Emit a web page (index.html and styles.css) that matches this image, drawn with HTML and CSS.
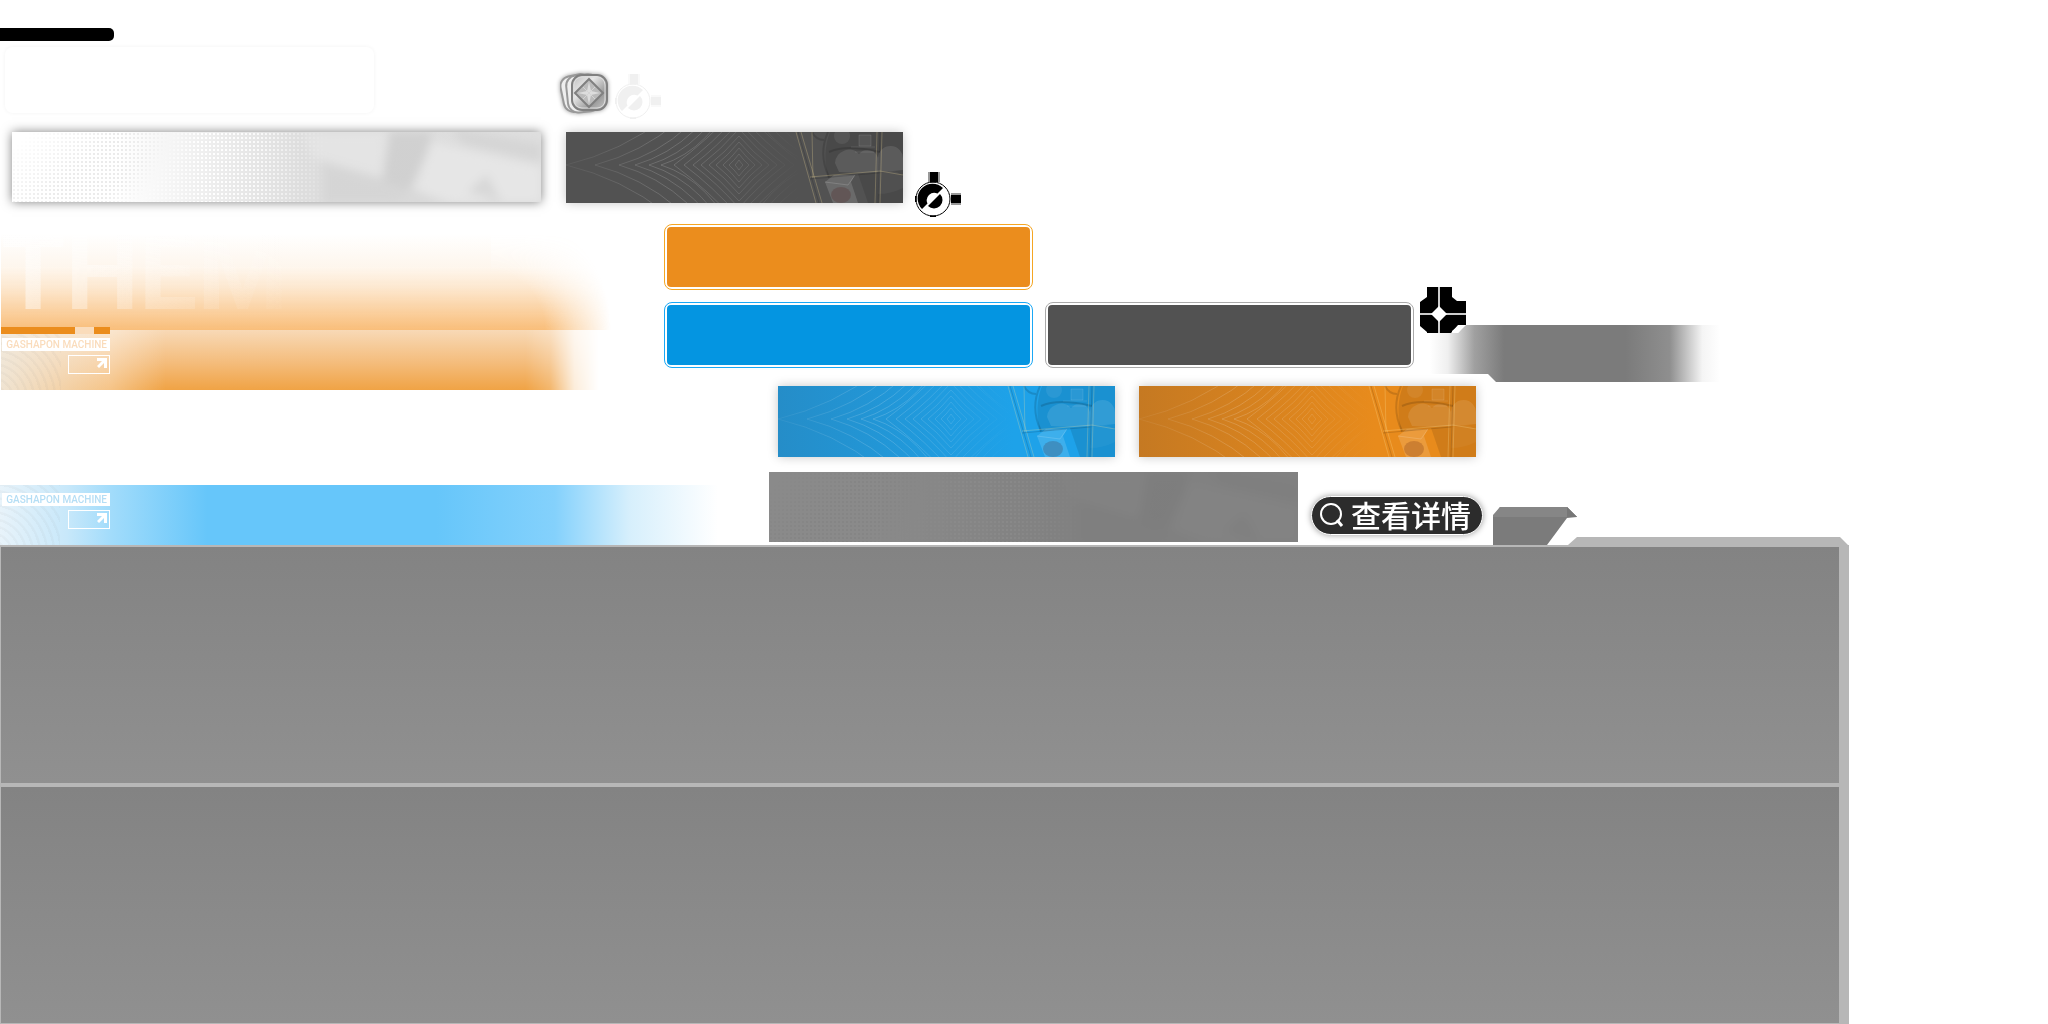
FILE: index.html
```html
<!DOCTYPE html>
<html lang="zh">
<head>
<meta charset="utf-8">
<title>GASHAPON MACHINE</title>
<link rel="stylesheet" href="styles.css">
</head>
<body>
<svg class="defs" width="0" height="0" aria-hidden="true">
  <defs>
    <path id="star" d="M-1 0Q-.35-.2 0-1Q.35-.2 1 0Q.35.2 0 1Q-.35.2-1 0Z" vector-effect="non-scaling-stroke"/>
    <path id="kite" d="M-1 0Q-.48-.42 0-1Q.48-.42 1 0Q.48.42 0 1Q-.48.42-1 0Z" vector-effect="non-scaling-stroke"/>
    <linearGradient id="fade"><stop offset="0" stop-color="#fff" stop-opacity=".3"/><stop offset=".3" stop-color="#fff"/><stop offset=".5" stop-color="#fff" stop-opacity=".7"/><stop offset=".7" stop-color="#fff" stop-opacity="0"/></linearGradient>
    <mask id="starMask" maskUnits="userSpaceOnUse" x="0" y="0" width="337" height="71"><rect width="337" height="71" fill="url(#fade)"/></mask>
    <symbol id="machine" viewBox="0 0 337 71">
      <g mask="url(#starMask)"><g transform="translate(173 33)" fill="none" stroke="#fff" stroke-opacity=".17">
        <use href="#kite" transform="scale(4 5)"/><use href="#kite" transform="scale(10 11)"/><use href="#kite" transform="scale(16 17)"/><use href="#kite" transform="scale(23 23)"/><use href="#kite" transform="scale(30 29)"/><use href="#kite" transform="scale(38 36)"/><use href="#kite" transform="scale(46 43)"/><use href="#kite" transform="scale(55 51)"/><use href="#kite" transform="scale(65 59)"/><use href="#star" transform="scale(78 80)"/><use href="#star" transform="scale(90 90)"/><use href="#star" transform="scale(104 100)"/><use href="#star" transform="scale(120 111)"/><use href="#star" transform="scale(144 124)"/><use href="#star" transform="scale(173 136)"/>
      </g></g>
      <path d="M264 0H337V71H302L292 42L262 46Q256 20 264 0Z" fill="#000" fill-opacity=".1"/>
      <path d="M246 0Q250 8 258 8M262 0Q252 22 263 45M263 20Q280 12 314 20" fill="none" stroke="#000" stroke-opacity=".14" stroke-width="2"/>
      <circle cx="276" cy="4" r="8" fill="#fff" fill-opacity=".07"/>
      <path d="M293 3H305V14H293ZM285 15H309M289 20H308" fill="#fff" fill-opacity=".07" stroke="#fff" stroke-opacity=".1"/>
      <path d="M269 31A14 14 0 0 1 293 22A11 11 0 0 1 312 26A10 10 0 0 1 337 27V38Q300 42 273 40Z" fill="#fff" fill-opacity=".1"/>
      <path d="M312 42Q330 35 337 45V56Q325 62 312 62Z" fill="#fff" fill-opacity=".04"/>
      <path d="M259 50L268 43H289L285 50L292 71H267Z" fill="#fff" fill-opacity=".14"/>
      <path d="M259 50L282 53L289 43" fill="none" stroke="#fff" stroke-opacity=".15"/>
      <ellipse cx="275" cy="63" rx="10" ry="8" fill="#400" fill-opacity=".18"/>
      <path d="M230 0L250 71M235 0L256 71M246 0L247 46M244 45L314 39L337 43M309 71L311 0M314 71L316 0" fill="none" stroke="#ffe9a0" stroke-opacity=".25"/>
      <path d="M232 0L253 71M312 71L314 0M244 47L312 41" fill="none" stroke="#000" stroke-opacity=".14"/>
    </symbol>

    <pattern id="dots" width="4" height="4" patternUnits="userSpaceOnUse"><rect x="1" y="1" width="2" height="2" fill="#ccc"/></pattern>
    <pattern id="holes" width="4" height="4" patternUnits="userSpaceOnUse"><rect x="1" y="1" width="2" height="2" fill="#fff"/></pattern>
    <linearGradient id="dotFade" gradientTransform="rotate(8)"><stop offset=".03" stop-color="#fff" stop-opacity="0"/><stop offset=".2" stop-color="#fff" stop-opacity=".4"/><stop offset=".3" stop-color="#fff" stop-opacity=".4"/><stop offset=".38" stop-color="#fff" stop-opacity="0"/></linearGradient>
    <linearGradient id="holeFade"><stop offset=".2" stop-color="#fff" stop-opacity="0"/><stop offset=".36" stop-color="#fff"/><stop offset=".46" stop-color="#fff" stop-opacity=".8"/><stop offset=".6" stop-color="#fff" stop-opacity="0"/></linearGradient>
    <linearGradient id="tone"><stop offset=".2" stop-color="#ddd" stop-opacity="0"/><stop offset=".55" stop-color="#ddd"/><stop offset="1" stop-color="#dedede"/></linearGradient>
    <mask id="dotMask" maskUnits="userSpaceOnUse" x="0" y="0" width="529" height="70"><rect width="529" height="70" fill="url(#dotFade)"/></mask>
    <mask id="holeMask" maskUnits="userSpaceOnUse" x="0" y="0" width="529" height="70"><rect width="529" height="70" fill="url(#holeFade)"/></mask>
    <filter id="soft"><feGaussianBlur stdDeviation="5"/></filter>
    <symbol id="halftone" viewBox="0 0 529 70">
      <rect width="529" height="70" fill="url(#tone)"/>
      <rect width="529" height="70" fill="url(#dots)" mask="url(#dotMask)"/>
      <rect width="529" height="70" fill="url(#holes)" mask="url(#holeMask)"/>
      <g filter="url(#soft)">
        <path d="M290 0H375L370 45L300 25Z" fill="#eee" fill-opacity=".4"/>
        <path d="M378 0H420L408 60L370 50Z" fill="#c8c8c8" fill-opacity=".6"/>
        <path d="M420 10L529 35V70H385L400 55Z" fill="#e9e9e9" fill-opacity=".8"/>
        <path d="M440 -4L529 12V30L450 12Z" fill="#c8c8c8" fill-opacity=".4"/>
        <path d="M455 60L475 42L490 70Z" fill="#c4c4c4" fill-opacity=".4"/>
        <path d="M310 30L380 50L440 72H310Z" fill="#d0d0d0" fill-opacity=".6"/>
      </g>
    </symbol>

    <symbol id="dial" viewBox="0 0 46 46">
      <g fill="currentColor">
        <path d="M13 0H25V10H13ZM36 21H46V33H36Z" fill-opacity=".4"/>
        <path d="M15 0H23V10H15ZM36 23H46V31H36Z"/>
      </g>
      <circle cx="18" cy="27" r="17" fill="#fff" stroke="currentColor"/>
      <path d="M15 10.500H21V9H15ZM15 45H21V43.500H15ZM0 24H1.500V30H0Z" fill="currentColor"/>
      <path d="M28 16A14.500 14.500 0 0 0 7 37L12.500 31.500A7.500 7.500 0 0 1 22.500 21.500Z" fill="currentColor"/>
      <path d="M25 22A8 8 0 0 1 13 34Z" fill="currentColor"/>
    </symbol>
    <symbol id="arrow" viewBox="0 0 10 10"><path d="M0 0H10V10H7V5L2 10L0 8L5 3H0Z" fill="#fff"/></symbol>
  </defs>
</svg>

<main class="sheet">
  <div class="top">
    <section class="left">
      <div class="bar"></div>
      <div class="blank"></div>
      <svg class="wide light" viewBox="0 0 529 70" aria-hidden="true"><use href="#halftone" width="529" height="70"/></svg>

      <div class="banner orange">
        <div class="glow"><span class="ghost">THEM</span></div>
        <div class="strip"><i></i><i></i><i></i></div>
        <div class="floor">
          <div class="tag">GASHAPON MACHINE</div>
          <button class="go" aria-label="Open"><svg width="10" height="10"><use href="#arrow"/></svg></button>
        </div>
      </div>

      <div class="banner blue">
        <div class="tag">GASHAPON MACHINE</div>
        <button class="go" aria-label="Open"><svg width="10" height="10"><use href="#arrow"/></svg></button>
      </div>
    </section>

    <section class="right">
      <div class="row icons">
        <svg class="tokens" width="56" height="56" viewBox="0 0 56 56" aria-hidden="true">
          <defs><linearGradient id="metal" x2="1" y2="1"><stop offset="0" stop-color="#bbb"/><stop offset=".35" stop-color="#e8e8e8"/><stop offset=".7" stop-color="#999"/><stop offset="1" stop-color="#ccc"/></linearGradient></defs>
          <g stroke="#999" stroke-width="2" fill="#eee">
            <rect x="2" y="15" width="30" height="36" rx="10" transform="rotate(-12 17 33)"/>
            <rect x="7" y="15" width="32" height="37" rx="10" transform="rotate(-6 22 33)"/>
            <rect x="12" y="15" width="35" height="35" rx="10" fill="url(#metal)" stroke="#808080"/>
          </g>
          <rect x="14" y="17" width="31" height="31" rx="8" fill="none" stroke="#ddd"/>
          <path d="M29 19L43 33L29 47L15 33Z" fill="#bbb" stroke="#808080" stroke-width="2"/>
          <path d="M29 22L31 31L40 33L31 35L29 44L27 35L18 33L27 31Z" fill="#ddd"/>
          <path d="M23 27L35 39M35 27L23 39" stroke="#d4d4d4"/>
        </svg>
        <svg class="dial faint" width="46" height="46" aria-hidden="true"><use href="#dial"/></svg>
      </div>
      <div class="row first">
        <svg class="card dark" viewBox="0 0 337 71" aria-hidden="true"><use href="#machine" width="337" height="71"/></svg>
        <svg class="dial" width="46" height="46" aria-hidden="true"><use href="#dial"/></svg>
      </div>
      <div class="row buttons">
        <button class="plate amber" aria-label="Amber"></button>
      </div>
      <div class="row buttons">
        <button class="plate sky" aria-label="Blue"></button>
        <button class="plate slate" aria-label="Grey"></button>
        <svg class="cross" width="306" height="96" viewBox="0 0 306 96" aria-hidden="true">
          <defs><linearGradient id="band"><stop offset="0" stop-color="#7b7b7b" stop-opacity="0"/><stop offset=".06" stop-color="#7b7b7b" stop-opacity=".12"/><stop offset=".15" stop-color="#7b7b7b" stop-opacity=".72"/><stop offset=".25" stop-color="#7b7b7b"/><stop offset=".66" stop-color="#7b7b7b"/><stop offset=".81" stop-color="#7b7b7b" stop-opacity=".85"/><stop offset=".86" stop-color="#7b7b7b" stop-opacity=".5"/><stop offset=".92" stop-color="#7b7b7b" stop-opacity=".08"/><stop offset=".98" stop-color="#7b7b7b" stop-opacity="0"/></linearGradient></defs>
          <path d="M10 38H306V95H76L68 87H10Z" fill="url(#band)"/>
          <path d="M31 38H46L38 46H31Z" fill="#fff"/>
          <path d="M7 0H32V10L37 14H46V38H38L31 46H7V45L0 39V15L7 10Z"/>
          <path d="M32 44L37 40H43L38 46H32Z" fill="#fff"/>
          <path d="M19 0V46M0 27H46" stroke="#ccc" stroke-width="2"/>
          <path d="M19 19L27 27L19 35L11 27Z" fill="#fff"/>
        </svg>
      </div>
      <div class="row cards">
        <svg class="card azure" viewBox="0 0 337 71" aria-hidden="true"><use href="#machine" width="337" height="71"/></svg>
        <svg class="card ochre" viewBox="0 0 337 71" aria-hidden="true"><use href="#machine" width="337" height="71"/></svg>
      </div>
      <div class="row last">
        <div class="wide grey"><svg viewBox="0 0 529 70" aria-hidden="true"><use href="#halftone" width="529" height="70"/></svg></div>
        <button class="pill">
          <svg width="24" height="24" viewBox="0 0 24 24" fill="none" stroke="#fff" aria-hidden="true"><circle cx="11" cy="11" r="10" stroke-width="2"/><path d="M17 17L22 23" stroke-width="3"/></svg>
          <span>查看详情</span>
        </button>
        <svg class="tab" width="84" height="38" viewBox="0 0 84 38" aria-hidden="true"><path d="M0 10L7 0H74L84 10L74 11L54 38H0Z" fill="#7b7b7b"/><path d="M0 10V8L7 0H74L84 10Z" fill="#868686"/><path d="M74 0L84 10H74Z" fill="#777"/></svg>
      </div>
    </section>
  </div>

  <section class="panels">
    <svg class="lip" width="281" height="10" viewBox="0 0 281 10" aria-hidden="true"><path d="M0 10V8L9 0H272L281 9V10Z" fill="#b7b7b7"/></svg>
    <div class="panel"></div>
    <div class="panel"></div>
  </section>
</main>
</body>
</html>
```
FILE: styles.css
```css
* { box-sizing: border-box; }
body { margin: 0; background: #fff; font-family: "Noto Sans", "Noto Sans CJK SC", sans-serif; }
svg { display: block; flex: none; }
button { margin: 0; padding: 0; border: 0; font: inherit; cursor: pointer; }
.defs { position: absolute; }
.sheet { overflow: hidden; }
.top { display: grid; grid-template-columns: 560px 1fr; }

/* Left column */
.left { display: flex; flex-direction: column; align-items: flex-start; padding-top: 28px; }
.bar { width: 114px; height: 13px; background: #000; border-radius: 0 5px 5px 0; }
.blank { width: 369px; height: 66px; margin: 6px 0 0 5px; border-radius: 8px; box-shadow: 0 0 4px rgba(0, 0, 0, .05); }
.wide { width: 529px; height: 70px; }
.light { margin: 19px 0 0 12px; background: #fff; box-shadow: 0 0 10px rgba(0, 0, 0, .5); }

.orange { width: 610px; margin: 23px 0 0 1px; }
.glow {
  height: 105px;
  background: linear-gradient(to bottom, rgba(249, 190, 122, 0) 8%, rgba(249, 190, 122, .13) 40%, rgba(249, 190, 122, .35) 59%, rgba(249, 190, 122, .65) 78%, #f9be7a);
  -webkit-mask: linear-gradient(#000, #000) left / 490px 100% no-repeat, radial-gradient(120px 130px at left bottom, #000 45%, rgba(0, 0, 0, .5) 70%, transparent) right / 120px 100% no-repeat;
  mask: linear-gradient(#000, #000) left / 490px 100% no-repeat, radial-gradient(120px 130px at left bottom, #000 45%, rgba(0, 0, 0, .5) 70%, transparent) right / 120px 100% no-repeat;
}
.ghost {
  display: block;
  font: 700 104px/98px Roboto, sans-serif;
  white-space: nowrap;
  color: transparent;
  background: linear-gradient(to right, rgba(255, 255, 255, .5), rgba(255, 255, 255, .3) 17%, rgba(255, 255, 255, .15) 30%, transparent 50%);
  -webkit-background-clip: text;
  background-clip: text;
}
.floor {
  height: 60px;
  padding: 8px 0 0 1px;
  background:
    repeating-radial-gradient(circle at -10px 70px, rgba(120, 120, 120, .05) 0 2px, transparent 3px 7px) 0 0 / 60px 60px no-repeat,
    linear-gradient(to right, rgba(240, 235, 225, .9), rgba(255, 255, 255, .35) 18%, transparent 27%),
    linear-gradient(to bottom, #f8d9b6, #f4bc7b 55%, #f0a345);
  -webkit-mask-image: linear-gradient(to right, #000 86%, rgba(0, 0, 0, .8) 90%, rgba(0, 0, 0, .2) 94%, transparent 98%);
  mask-image: linear-gradient(to right, #000 86%, rgba(0, 0, 0, .8) 90%, rgba(0, 0, 0, .2) 94%, transparent 98%);
}
.strip { position: relative; z-index: 1; display: grid; grid-template-columns: 74px 19px 16px; width: 109px; height: 7px; margin: -3px 0 -4px; }
.strip i { background: #eb8d1d; }
.strip i:nth-child(2) { background: #fadcbb; }
.tag {
  width: 108px;
  height: 13px;
  background: #fff;
  color: #fadcbc;
  font: 500 10px/13px Roboto, "Liberation Sans", sans-serif;
  text-align: right;
  padding-right: 3px;
  white-space: nowrap;
}
.go { display: flex; justify-content: flex-end; width: 42px; height: 19px; margin: 4px 0 0 66px; padding: 2px; background: none; border: 1px solid #fff; }
.blue {
  width: 740px;
  height: 60px;
  margin-top: 95px;
  padding: 8px 0 0 2px;
  background:
    repeating-radial-gradient(circle at -10px 70px, rgba(120, 120, 120, .05) 0 2px, transparent 3px 7px) 0 0 / 60px 60px no-repeat,
    linear-gradient(to right, #e8f3fa, #c8e8fa 9%, #a2dcfb 15%, #66c6fa 28%, #66c6fa 59%, #84d1fc 75%, #d6effc 85%, #fff 97%);
}
.blue .tag { color: #b5def5; }

/* Right column */
.row { display: flex; align-items: flex-start; }
.icons { padding-top: 60px; height: 132px; }
.tokens { filter: drop-shadow(0 0 2px rgba(0, 0, 0, .4)); }
.dial { color: #000; }
.icons .dial { margin: 14px 0 0 -1px; }
.icons .faint { color: #f0f0f0; }
.first { padding-left: 6px; gap: 12px; height: 92px; }
.first .dial { margin-top: 40px; }
.card { width: 337px; height: 71px; box-shadow: 0 0 10px rgba(0, 0, 0, .22); }
.dark { background: #525252; }
.azure { background: linear-gradient(to right, #258dc8, #1ea2e9 70%); }
.ochre { background: linear-gradient(to right, #c57922, #e88b1c 70%); }
.buttons { padding-left: 104px; gap: 12px; height: 66px; }
.buttons + .buttons { margin-top: 12px; }
.plate { flex: none; width: 369px; height: 66px; padding: 2px; border: 1px solid currentColor; border-radius: 8px; background: #fff; }
.plate::before { content: ""; display: block; height: 100%; border-radius: 4px; background: var(--fill); }
.amber { color: #f5a623; --fill: #eb8d1d; }
.sky { color: #1aa8f5; --fill: #0495e1; }
.slate { color: #aaa; --fill: #525252; }
.cross { margin: -15px 0 0 -6px; }
.cards { padding: 18px 0 0 218px; gap: 24px; }
.last { padding: 15px 0 0 209px; gap: 13px; height: 88px; }
.grey { flex: none; background: #8a8a8a; }
.grey svg { opacity: .5; mix-blend-mode: multiply; }
.pill {
  display: flex;
  align-items: center;
  gap: 7px;
  flex: none;
  width: 172px;
  height: 39px;
  margin-top: 24px;
  padding: 0 0 2px 8px;
  border: 1px solid #fff;
  border-radius: 20px;
  background: #2c2c2c;
  color: #fff;
  font: 500 30px/34px "Noto Sans CJK SC", sans-serif;
  white-space: nowrap;
  box-shadow: 0 0 6px rgba(0, 0, 0, .4);
}
.pill span { padding-bottom: 2px; }
.tab { margin: 35px 0 0 -3px; }

/* Stacked panels */
.panels { margin-right: 199px; border: solid #b7b7b7; border-width: 2px 10px 0 1px; }
.lip { margin: -10px -10px 0 auto; }
.panel { height: 236px; background: linear-gradient(to bottom, #838383, #909090); }
.panel + .panel { height: 241px; border-top: 4px solid #b7b7b7; border-bottom: 1px solid #b7b7b7; }
```
